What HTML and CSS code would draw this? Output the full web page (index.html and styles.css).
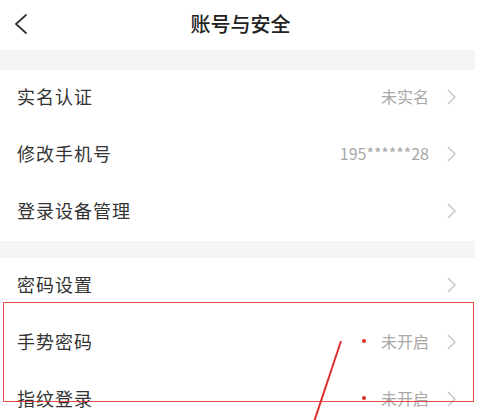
FILE: index.html
```html
<!DOCTYPE html>
<html lang="zh-CN">
<head>
  <meta charset="UTF-8" />
  <title>账号与安全</title>
  <meta name="viewport" content="width=device-width, initial-scale=1.0" />
  <link rel="stylesheet" href="styles.css">
</head>
<body>

  <header class="topbar">
    <button class="voltar" aria-label="返回">
      <svg width="14" height="20" viewBox="0 0 14 20"><path d="M12 1 L2 10 L12 19" fill="none" stroke="#333" stroke-width="1.8" stroke-linejoin="round" stroke-linecap="round"/></svg>
    </button>
    <h1>账号与安全</h1>
    <span></span>
  </header>

  <div class="faixa"></div>

  <ul class="lista">
    <li class="item">
      <span class="rotulo">实名认证</span>
      <span class="valor">未实名</span>
      <svg class="seta" width="9" height="16" viewBox="0 0 9 16"><path d="M1 1 L8 8 L1 15" fill="none" stroke="#c8c8c8" stroke-width="1.5"/></svg>
    </li>
    <li class="item">
      <span class="rotulo">修改手机号</span>
      <span class="valor">195******28</span>
      <svg class="seta" width="9" height="16" viewBox="0 0 9 16"><path d="M1 1 L8 8 L1 15" fill="none" stroke="#c8c8c8" stroke-width="1.5"/></svg>
    </li>
    <li class="item">
      <span class="rotulo">登录设备管理</span>
      <svg class="seta" width="9" height="16" viewBox="0 0 9 16"><path d="M1 1 L8 8 L1 15" fill="none" stroke="#c8c8c8" stroke-width="1.5"/></svg>
    </li>
  </ul>

  <div class="faixa curta"></div>

  <ul class="lista">
    <li class="item">
      <span class="rotulo">密码设置</span>
      <svg class="seta" width="9" height="16" viewBox="0 0 9 16"><path d="M1 1 L8 8 L1 15" fill="none" stroke="#c8c8c8" stroke-width="1.5"/></svg>
    </li>
    <li class="item">
      <span class="rotulo">手势密码</span>
      <span class="ponto"></span>
      <span class="valor">未开启</span>
      <svg class="seta" width="9" height="16" viewBox="0 0 9 16"><path d="M1 1 L8 8 L1 15" fill="none" stroke="#c8c8c8" stroke-width="1.5"/></svg>
    </li>
    <li class="item">
      <span class="rotulo">指纹登录</span>
      <span class="ponto"></span>
      <span class="valor">未开启</span>
      <svg class="seta" width="9" height="16" viewBox="0 0 9 16"><path d="M1 1 L8 8 L1 15" fill="none" stroke="#c8c8c8" stroke-width="1.5"/></svg>
    </li>
  </ul>

  <!-- marcação vermelha por cima da captura -->
  <div class="destaque"></div>
  <svg class="flecha" width="481" height="420" viewBox="0 0 481 420">
    <line x1="341" y1="341" x2="314" y2="422" stroke="#e0302c" stroke-width="2"/>
  </svg>

</body>
</html>
```

FILE: styles.css
```css
:root {
  --texto: #333333;
  --cinza-texto: #a8a8a8;
  --fundo-faixa: #f4f5f7;
  --vermelho: #e0302c;
}

body {
  margin: 0;
  width: 481px;
  height: 420px;
  overflow: hidden;
  background: #ffffff;
  font-family: "Noto Sans CJK SC", "Noto Sans", sans-serif;
  color: var(--texto);
  position: relative;
}

.topbar {
  height: 50px;
  display: grid;
  grid-template-columns: 48px 1fr 48px;
  align-items: center;
}

.voltar {
  background: none;
  border: none;
  padding: 0 0 2px 14px;
  display: flex;
  align-items: center;
  cursor: pointer;
}

.topbar h1 {
  margin: 0;
  font-size: 20px;
  font-weight: 500;
  text-align: center;
  color: #222;
  padding-bottom: 4px;
}

.faixa {
  height: 20px;
  width: 475px;
  background: var(--fundo-faixa);
}

.faixa.curta {
  height: 17px;
}

.lista {
  list-style: none;
  margin: 0;
  padding: 0;
}

.item {
  height: 57px;
  display: flex;
  align-items: center;
  padding: 0 25px 6px 17px;
  box-sizing: border-box;
}

.rotulo {
  flex: 1;
  font-size: 18px;
  letter-spacing: 1px;
}

.valor {
  font-size: 16px;
  color: var(--cinza-texto);
  margin-right: 18px;
}

.ponto {
  width: 4px;
  height: 4px;
  border-radius: 50%;
  background: var(--vermelho);
  margin-right: 15px;
}

.seta {
  display: block;
  margin-top: 2px;
}

.destaque {
  position: absolute;
  left: 3px;
  top: 302px;
  width: 471px;
  height: 100px;
  border: 1.5px solid var(--vermelho);
  box-sizing: border-box;
  opacity: 0.85;
}

.flecha {
  position: absolute;
  left: 0;
  top: 0;
}
```
